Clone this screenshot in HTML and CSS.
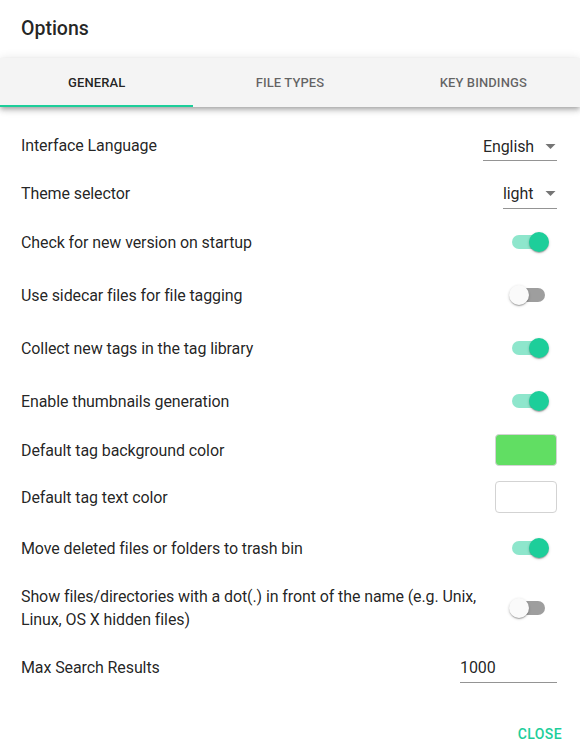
FILE: index.html
```html
<!DOCTYPE html>
<html>
<head>
<meta charset="utf-8">
<link rel="stylesheet" href="styles.css">
</head>
<body>
<div class="dialog">
  <h2 class="title">Options</h2>
  <div class="tabs">
    <div class="tab active">General</div>
    <div class="tab">File Types</div>
    <div class="tab">Key Bindings</div>
  </div>
  <div class="list">
    <div class="row r47"><span class="label">Interface Language</span>
      <div class="select sel-lang"><span>English</span><svg class="caret" viewBox="0 0 10 5"><path d="M0 0h10L5 5z"/></svg></div></div>
    <div class="row r48"><span class="label">Theme selector</span>
      <div class="select sel-theme"><span>light</span><svg class="caret" viewBox="0 0 10 5"><path d="M0 0h10L5 5z"/></svg></div></div>
    <div class="row r50"><span class="label">Check for new version on startup</span><div class="switch on"><span class="track"></span><span class="thumb"></span></div></div>
    <div class="row r56"><span class="label">Use sidecar files for file tagging</span><div class="switch"><span class="track"></span><span class="thumb"></span></div></div>
    <div class="row r50"><span class="label">Collect new tags in the tag library</span><div class="switch on"><span class="track"></span><span class="thumb"></span></div></div>
    <div class="row r56"><span class="label">Enable thumbnails generation</span><div class="switch on"><span class="track"></span><span class="thumb"></span></div></div>
    <div class="row r42"><span class="label">Default tag background color</span><div class="swatch green"></div></div>
    <div class="row r52"><span class="label">Default tag text color</span><div class="swatch"></div></div>
    <div class="row r50"><span class="label">Move deleted files or folders to trash bin</span><div class="switch on"><span class="track"></span><span class="thumb"></span></div></div>
    <div class="row r70"><span class="label wide">Show files/directories with a dot(.) in front of the name (e.g. Unix, Linux, OS X hidden files)</span><div class="switch"><span class="track"></span><span class="thumb"></span></div></div>
    <div class="row r48"><span class="label">Max Search Results</span><div class="input">1000</div></div>
  </div>
  <div class="actions"><button class="close">Close</button></div>
</div>
</body>
</html>
```
FILE: styles.css
```css
* { box-sizing: border-box; }
html, body { margin: 0; padding: 0; background: #fff; }
body { font-family: Roboto, "Noto Sans", sans-serif; color: rgba(0,0,0,0.87); width: 580px; height: 754px; overflow: hidden; }
.dialog { display: flex; flex-direction: column; }
.title { margin: 0; padding: 16px 21px 0; height: 58px; font-size: 19.5px; font-weight: 500; line-height: 26px; }
.tabs { display: flex; height: 49px; background: #f4f4f4; box-shadow: 0 2px 4px -1px rgba(0,0,0,0.2), 0 4px 5px 0 rgba(0,0,0,0.14), 0 1px 10px 0 rgba(0,0,0,0.12); position: relative; z-index: 1; }
.tab { flex: 1; display: flex; align-items: center; justify-content: center; text-transform: uppercase; font-size: 13px; font-weight: 500; letter-spacing: 0.1px; color: rgba(0,0,0,0.6); padding-bottom: 1px; }
.tab.active { color: rgba(0,0,0,0.87); box-shadow: inset 0 -2px 0 #1dce9a; }
.list { display: flex; flex-direction: column; padding: 15px 23px 0 21px; }
.row { display: flex; align-items: center; justify-content: space-between; font-size: 16px; line-height: 23px; letter-spacing: -0.1px; }
.r42 { height: 42px; } .r47 { height: 47px; } .r48 { height: 48px; } .r50 { height: 50px; }
.r52 { height: 52px; } .r56 { height: 56px; } .r70 { height: 70px; }
.label.wide { max-width: 470px; }
.select { display: flex; align-items: center; height: 30px; border-bottom: 1px solid rgba(0,0,0,0.42); font-size: 16px; padding-top: 1px; }
.select span { padding-right: 8px; }
.sel-lang { width: 74px; margin-top: 1px; }
.sel-theme { width: 54px; margin-top: 1px; }
.caret { width: 11px; height: 5px; fill: rgba(0,0,0,0.54); margin-left: auto; margin-right: 1px; }
.switch { position: relative; width: 36px; height: 24px; margin-right: 11px; }
.track { position: absolute; left: 2px; top: 5px; width: 33px; height: 14px; border-radius: 7px; background: #000; opacity: 0.38; }
.thumb { position: absolute; left: -1px; top: 2px; width: 20px; height: 20px; border-radius: 50%; background: #fafafa; box-shadow: 0 1px 3px rgba(0,0,0,0.2), 0 1px 1px rgba(0,0,0,0.14), 0 2px 1px -1px rgba(0,0,0,0.12); }
.switch.on .track { background: #1dce9a; opacity: 0.5; }
.switch.on .thumb { left: 19px; background: #1dce9a; }
.swatch { width: 62px; height: 32px; border: 1px solid #d3d3d3; border-radius: 4px; background: #fff; }
.swatch.green { background: #61de63; }
.input { width: 97px; height: 30px; border-bottom: 1px solid rgba(0,0,0,0.42); font-size: 16px; line-height: 30px; margin-top: 2px; }
.actions { display: flex; justify-content: flex-end; padding: 29px 10px 0 0; }
.close { border: 0; background: none; font-family: Roboto, sans-serif; font-size: 14px; font-weight: 500; text-transform: uppercase; letter-spacing: 0.4px; color: #1dce9a; padding: 6px 8px; line-height: 16px; }
```
